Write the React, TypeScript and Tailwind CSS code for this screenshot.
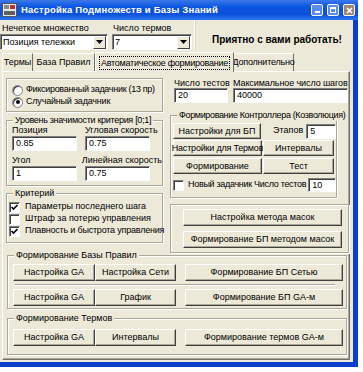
import React from "react";

function Btn({ className = "", children }: { className?: string; children?: React.ReactNode }) {
  return (
    <div
      className={`flex items-center justify-center whitespace-nowrap bg-[#ece9d8] border border-t-white border-l-white border-r-[#404040] border-b-[#404040] shadow-[inset_-1px_-1px_0_#aca899] leading-none ${className}`}
    >
      {children}
    </div>
  );
}

function Field({ className = "", value }: { className?: string; value: string }) {
  return (
    <div
      className={`flex items-center bg-white border border-t-[#808080] border-l-[#808080] border-r-white border-b-white shadow-[inset_1px_1px_0_#404040] pl-[3px] leading-none ${className}`}
    >
      {value}
    </div>
  );
}

function Group({
  className = "",
  title,
  titleClass = "",
  children,
}: {
  className?: string;
  title?: string;
  titleClass?: string;
  children?: React.ReactNode;
}) {
  return (
    <div className={`relative border border-[#aca899] shadow-[inset_1px_1px_0_#fff,1px_1px_0_#fff] ${className}`}>
      {title && (
        <div className={`absolute left-[6px] top-[-6px] bg-[#ece9d8] px-[2px] leading-[11px] whitespace-nowrap ${titleClass}`}>
          {title}
        </div>
      )}
      {children}
    </div>
  );
}

function Check({ checked }: { checked: boolean }) {
  return (
    <div className="w-[11px] h-[11px] bg-white border border-t-[#808080] border-l-[#808080] border-r-white border-b-white shadow-[inset_1px_1px_0_#404040] flex items-center justify-center shrink-0">
      {checked && (
        <svg width="9" height="9" viewBox="0 0 9 9">
          <path d="M1.5 4 L3.5 6 L7.5 2" stroke="#000" strokeWidth="1.6" fill="none" />
        </svg>
      )}
    </div>
  );
}

function Radio({ checked }: { checked: boolean }) {
  return (
    <div className="w-[11px] h-[11px] rounded-full bg-white border border-[#808080] shadow-[inset_1px_1px_0_#404040] flex items-center justify-center shrink-0">
      {checked && <div className="w-[4px] h-[4px] rounded-full bg-black" />}
    </div>
  );
}

function Combo({ className = "", value }: { className?: string; value: string }) {
  return (
    <div
      className={`flex items-center bg-white border border-t-[#808080] border-l-[#808080] border-r-white border-b-white shadow-[inset_1px_1px_0_#404040] h-[16px] ${className}`}
    >
      <div className="flex-1 pl-[2px] leading-none whitespace-nowrap">{value}</div>
      <div className="w-[13px] h-[13px] mr-[1px] bg-[#ece9d8] border border-t-white border-l-white border-r-[#404040] border-b-[#404040] flex items-center justify-center">
        <svg width="7" height="4" viewBox="0 0 7 4">
          <path d="M0 0 H7 L3.5 4 Z" fill="#000" />
        </svg>
      </div>
    </div>
  );
}

export default function App() {
  return (
    <div className="w-[363px] h-[372px] bg-white overflow-hidden font-['Liberation_Sans',Arial,sans-serif] text-[9px] text-black">
      <div className="w-[358px] h-[367px] flex flex-col">
        {/* Title bar */}
        <div className="h-[20px] flex items-center bg-[linear-gradient(180deg,#3a78ea_0%,#0b55e0_35%,#0a50da_70%,#2f74f0_100%)]">
          <div className="ml-[2px] w-[15px] h-[14px] flex items-center justify-center">
            <svg width="15" height="14" viewBox="0 0 15 14">
              <rect x="0.5" y="0.5" width="14" height="13" fill="#e8e8e8" stroke="#555" />
              <rect x="2" y="2" width="5" height="4" fill="#8a8a8a" />
              <rect x="8" y="2" width="5" height="4" fill="#c03030" />
              <rect x="2" y="8" width="11" height="4" fill="#606060" />
            </svg>
          </div>
          <div className="ml-[4px] text-white font-bold text-[9.5px] leading-none whitespace-nowrap tracking-[0.2px]">
            Настройка Подмножеств и Базы Знаний
          </div>
          <div className="ml-auto mr-[3px] flex items-center gap-[4px]">
            <div className="w-[12px] h-[12px] rounded-[2px] border border-white bg-[#5a8cf0] flex items-end justify-center pb-[2px]">
              <div className="w-[5px] h-[2px] bg-white" />
            </div>
            <div className="w-[12px] h-[12px] rounded-[2px] border border-white bg-[#5a8cf0] flex items-center justify-center">
              <div className="w-[6px] h-[6px] border border-white border-t-2" />
            </div>
            <div className="w-[12px] h-[12px] rounded-[2px] border border-white bg-[#9d8676] flex items-center justify-center">
              <svg width="7" height="7" viewBox="0 0 7 7">
                <path d="M1 1 L6 6 M6 1 L1 6" stroke="#fff" strokeWidth="1.6" />
              </svg>
            </div>
          </div>
        </div>

        <div className="flex flex-1">
          {/* Client area */}
          <div className="w-[353px] bg-[#ece9d8] flex flex-col">
            {/* Top row */}
            <div className="h-[30px] flex">
              <div className="w-[108px] flex flex-col">
                <div className="h-[14px] pl-[2px] pt-[3px] leading-[10px] whitespace-nowrap">Нечеткое множество</div>
                <Combo className="w-[108px]" value="Позиция тележки" />
              </div>
              <div className="ml-[4px] w-[80px] flex flex-col">
                <div className="h-[14px] pl-[1px] pt-[3px] leading-[10px] whitespace-nowrap">Число термов</div>
                <Combo className="w-[80px]" value="7" />
              </div>
              <div className="ml-[2px] flex-1 border-l border-l-white shadow-[inset_1px_0_0_#d8d4c4] flex items-center justify-center pt-[8px] pl-[6px] font-bold text-[10px] whitespace-nowrap">
                Приятно с вами работать!
              </div>
            </div>

            {/* Tabs */}
            <div className="h-[21px] ml-[2px] flex items-end">
              <div className="w-[31px] h-[18px] flex items-center justify-center border-t border-l border-t-white border-l-white border-r border-r-[#716f64] whitespace-nowrap">
                Термы
              </div>
              <div className="w-[62px] h-[18px] flex items-center justify-center border-t border-t-white border-r border-r-[#716f64] whitespace-nowrap">
                База Правил
              </div>
              <div className="w-[139px] h-[20px] -mb-px relative z-10 bg-[#ece9d8] flex items-center justify-center border-t border-l border-t-white border-l-white border-r border-r-[#716f64] whitespace-nowrap">
                <span className="border border-dotted border-black px-[1px] leading-[12px] tracking-[-0.25px]">Автоматическое формирование</span>
              </div>
              <div className="w-[60px] h-[18px] flex items-center justify-center border-t border-t-white border-r border-r-[#716f64] whitespace-nowrap tracking-[-0.2px]">
                Дополнительно
              </div>
            </div>

            {/* Tab panel */}
            <div className="ml-[2px] w-[348px] h-[289px] border border-t-white border-l-white border-r-[#716f64] border-b-[#716f64] shadow-[inset_-1px_-1px_0_#aca899] flex flex-col">
              <div className="mt-[6px] flex">
                {/* Left column */}
                <div className="ml-[3px] w-[157px] flex flex-col">
                  <Group className="h-[34px] pt-[5px] pl-[5px] flex flex-col">
                    <div className="h-[12px] flex items-center gap-[3px] whitespace-nowrap">
                      <Radio checked={false} />
                      <span className="tracking-[-0.3px]">Фиксированный задачник (13 пр)</span>
                    </div>
                    <div className="h-[12px] flex items-center gap-[3px] whitespace-nowrap">
                      <Radio checked={true} />
                      <span className="tracking-[-0.2px]">Случайный задачник</span>
                    </div>
                  </Group>

                  <Group
                    className="mt-[8px] h-[66px] pt-[3px] pl-[5px] flex flex-col"
                    title="Уровень значимости критерия [0;1]"
                    titleClass="tracking-[-0.3px]"
                  >
                    <div className="h-[12px] flex leading-[12px] whitespace-nowrap">
                      <div className="w-[73px]">Позиция</div>
                      <div>Угловая скорость</div>
                    </div>
                    <div className="flex">
                      <Field className="w-[65px] h-[15px]" value="0.85" />
                      <Field className="ml-[8px] w-[65px] h-[15px]" value="0.75" />
                    </div>
                    <div className="mt-[3px] h-[12px] flex leading-[12px] whitespace-nowrap">
                      <div className="w-[73px]">Угол</div>
                      <div>Линейная скорость</div>
                    </div>
                    <div className="flex">
                      <Field className="w-[65px] h-[15px]" value="1" />
                      <Field className="ml-[8px] w-[65px] h-[15px]" value="0.75" />
                    </div>
                  </Group>

                  <Group className="mt-[7px] h-[50px] pt-[7px] pl-[2px] flex flex-col" title="Критерий">
                    <div className="h-[12px] flex items-center gap-[5px] whitespace-nowrap">
                      <Check checked={true} />
                      <span>Параметры последнего шага</span>
                    </div>
                    <div className="h-[12px] flex items-center gap-[5px] whitespace-nowrap">
                      <Check checked={false} />
                      <span>Штраф за потерю управления</span>
                    </div>
                    <div className="h-[12px] flex items-center gap-[5px] whitespace-nowrap">
                      <Check checked={true} />
                      <span className="tracking-[-0.2px]">Плавность и быстрота управления</span>
                    </div>
                  </Group>
                </div>

                {/* Right column */}
                <div className="ml-[7px] w-[179px] flex flex-col">
                  <div className="h-[10px] flex leading-[10px] whitespace-nowrap">
                    <div className="ml-[4px] w-[59px]">Число тестов</div>
                    <div className="tracking-[-0.1px]">Максимальное число шагов</div>
                  </div>
                  <div className="flex">
                    <Field className="ml-[4px] w-[54px] h-[15px]" value="20" />
                    <Field className="ml-[5px] w-[115px] h-[15px]" value="40000" />
                  </div>

                  <Group
                    className="mt-[12px] w-[167px] h-[83px] pt-[7px] pl-[2px] flex flex-col"
                    title="Формирование Контроллера (Козволюция)"
                    titleClass="tracking-[-0.35px] left-[4px]"
                  >
                    <div className="h-[16px] flex items-center">
                      <Btn className="w-[89px] h-[16px]">Настройки для БП</Btn>
                      <div className="ml-[12px] whitespace-nowrap">Этапов</div>
                      <Field className="ml-[3px] w-[30px] h-[15px]" value="5" />
                    </div>
                    <div className="mt-[1px] h-[16px] flex">
                      <Btn className="w-[89px] h-[16px] tracking-[-0.2px]">Настройки для Термов</Btn>
                      <Btn className="ml-[1px] w-[71px] h-[16px]">Интервалы</Btn>
                    </div>
                    <div className="mt-[2px] h-[16px] flex">
                      <Btn className="w-[89px] h-[16px]">Формирование</Btn>
                      <Btn className="ml-[1px] w-[71px] h-[16px]">Тест</Btn>
                    </div>
                    <div className="mt-[4px] h-[14px] flex items-center whitespace-nowrap">
                      <Check checked={false} />
                      <span className="ml-[4px] tracking-[-0.3px]">Новый задачник Число тестов</span>
                      <Field className="ml-[2px] w-[28px] h-[14px]" value="10" />
                    </div>
                  </Group>

                  <Group className="mt-[6px] h-[49px] pt-[4px] pl-[12px] flex flex-col">
                    <Btn className="w-[159px] h-[17px]">Настройка метода масок</Btn>
                    <Btn className="mt-[5px] w-[159px] h-[17px]">Формирование БП методом масок</Btn>
                  </Group>
                </div>
              </div>

              {/* Base group */}
              <Group className="mt-[2px] ml-[4px] w-[340px] h-[54px] pt-[8px] pl-[5px] flex flex-col" title="Формирование Базы Правил">
                <div className="flex h-[17px]">
                  <Btn className="w-[82px] h-[17px]">Настройка GA</Btn>
                  <Btn className="w-[81px] h-[17px]">Настройка Сети</Btn>
                  <Btn className="ml-[9px] w-[158px] h-[17px]">Формирование БП Сетью</Btn>
                </div>
                <div className="mt-[3px] ml-[2px] w-[320px] h-[2px] border-t border-t-[#aca899] border-b border-b-white" />
                <div className="mt-[3px] flex h-[17px]">
                  <Btn className="w-[82px] h-[17px]">Настройка GA</Btn>
                  <Btn className="w-[81px] h-[17px]">График</Btn>
                  <Btn className="ml-[9px] w-[158px] h-[17px]">Формирование БП GA-м</Btn>
                </div>
              </Group>

              {/* Terms group */}
              <Group className="mt-[9px] ml-[4px] w-[340px] h-[37px] pt-[10px] pl-[5px] flex flex-col" title="Формирование Термов">
                <div className="flex h-[17px]">
                  <Btn className="w-[82px] h-[17px]">Настройка GA</Btn>
                  <Btn className="w-[81px] h-[17px]">Интервалы</Btn>
                  <Btn className="ml-[9px] w-[158px] h-[17px]">Формирование термов GA-м</Btn>
                </div>
              </Group>
            </div>
          </div>
          <div className="w-[5px] bg-[#0b3fcf]" />
        </div>
        <div className="h-[5px] bg-[#0b3fcf]" />
      </div>
    </div>
  );
}
